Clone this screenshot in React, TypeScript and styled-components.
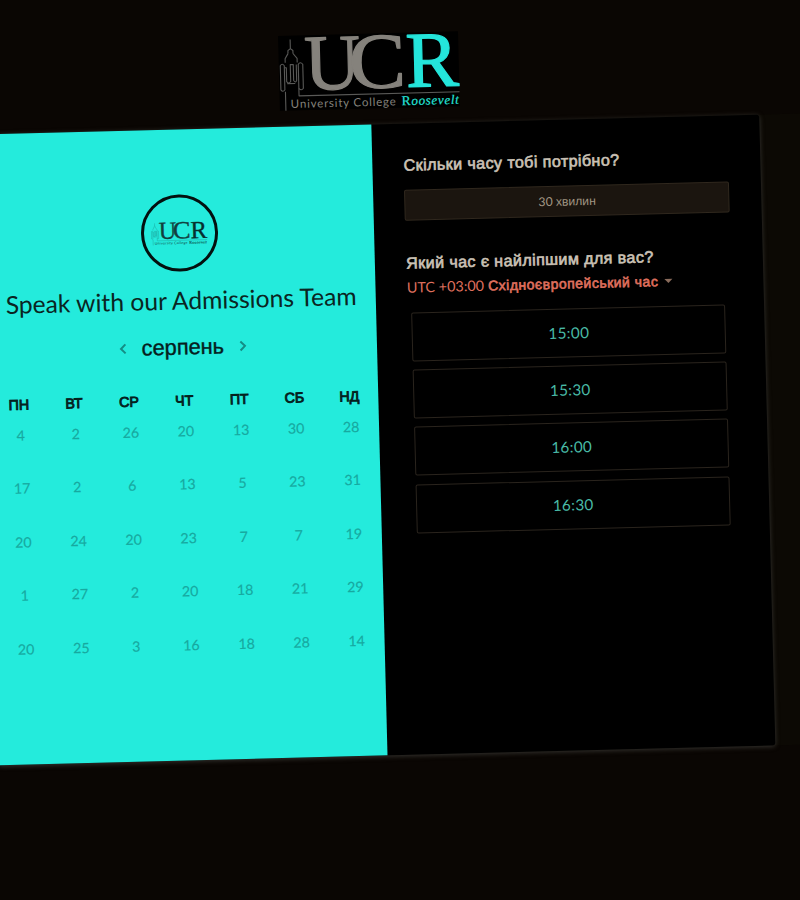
import React from "react";
import styled, { createGlobalStyle } from "styled-components";

const GlobalStyle = createGlobalStyle`
  html, body { margin: 0; height: 100%; overflow: hidden; background: #0a0603; }
  *, *::before, *::after { box-sizing: border-box; }
`;

const latin = `Lato, "Liberation Sans", sans-serif`;
const cyrillic = `"Liberation Sans", Arial, sans-serif`;

const Viewport = styled.div`
  width: 800px;
  height: 900px;
  overflow: hidden;
  background: #0a0603;
  font-family: ${latin};
`;

const Stage = styled.main`
  width: 840px;
  height: 920px;
  transform: rotate(-1.47deg);
  transform-origin: 0 0;
`;

const Header = styled.header`
  height: 134.2px;
  padding: 42.8px 0 0 277.4px;
`;

const LogoPlate = styled.div`
  width: 180px;
  height: 75px;
  background: #000;
`;

const Band = styled.section`
  display: flex;
  width: 840px;
  height: 630.7px;
  background: #0c0904;
`;

const Card = styled.div`
  display: flex;
  flex: none;
  width: 777.5px;
  height: 630.7px;
  margin-left: -21.2px;
  border-radius: 3px;
  background: #000;
  box-shadow: 0 1px 5px 0 rgba(92, 92, 88, 0.55);
`;

const CalendarPane = styled.div`
  display: flex;
  flex: none;
  flex-direction: column;
  align-items: center;
  width: 389px;
  padding-top: 64.5px;
  background: #24ebdc;
`;

const Avatar = styled.div`
  display: flex;
  align-items: center;
  justify-content: center;
  width: 77px;
  height: 77px;
  border: 3px solid #03100f;
  border-radius: 50%;
`;

const Title = styled.h1`
  margin: 14px 0 0;
  height: 30px;
  font: 400 24.65px/30px ${latin};
  color: #0a2522;
  white-space: nowrap;
`;

const MonthRow = styled.div`
  display: flex;
  align-items: center;
  justify-content: center;
  gap: 15px;
  height: 30px;
  margin-top: 17px;
  padding-left: 1px;
`;

const Month = styled.span`
  font: 400 21.8px/30px ${cyrillic};
  color: #05201d;
  -webkit-text-stroke: 0.4px #05201d;
`;

const ArrowButton = styled.button`
  display: flex;
  padding: 0;
  border: 0;
  background: none;
  color: #148d85;
`;

const Week = styled.div`
  display: grid;
  grid-template-columns: repeat(7, 55.1px);
  text-align: center;
`;

const Weekdays = styled(Week)`
  margin: 28px 0 0 1px;
  font: 400 14.2px/20px ${cyrillic};
  color: #04211e;
  -webkit-text-stroke: 0.9px #04211e;
`;

const Dates = styled(Week)`
  grid-auto-rows: 53.4px;
  margin: 1.3px 0 0 3px;
  font: 400 14.2px/40px ${latin};
  color: #17a9a0;
  -webkit-text-stroke: 0.15px #17a9a0;
`;

const BookingPane = styled.div`
  flex: 1;
  padding: 31px 32px 0 31.5px;
`;

const Question = styled.h2`
  margin: 0;
  height: 20px;
  font: 400 16.1px/20px ${cyrillic};
  letter-spacing: 0.4px;
  color: #cbc2b6;
  -webkit-text-stroke: 0.65px #cbc2b6;
  white-space: nowrap;
`;

const Duration = styled.div`
  height: 31px;
  margin: 15.3px 0 31.5px;
  border: 1px solid #30281e;
  border-radius: 2px;
  background: #1b150f;
  color: #a19583;
  font: 400 12.2px/29px ${latin};
  text-align: center;
`;

const CyrillicText = styled.span`
  font-family: ${cyrillic};
`;

const TimeZone = styled.button`
  display: flex;
  align-items: center;
  gap: 4px;
  height: 20px;
  margin-top: 5.5px;
  padding: 0;
  border: 0;
  background: none;
  color: #df6f5d;
  font: 400 14.4px/20px ${latin};
  white-space: nowrap;
`;

const ZoneName = styled.span`
  font: 400 14px/20px ${cyrillic};
  letter-spacing: 0.5px;
  -webkit-text-stroke: 0.65px #df6f5d;
`;

const Caret = styled.i`
  margin-left: 2.5px;
  border: 4px solid transparent;
  border-top-color: #8a6c5c;
  border-bottom: 0;
`;

const Slots = styled.div`
  display: flex;
  flex-direction: column;
  gap: 8.4px;
  margin: 14.2px 7.5px 0 4px;
`;

const Slot = styled.button`
  height: 49px;
  padding: 0;
  border: 1px solid #2a241d;
  border-radius: 2px;
  background: transparent;
  color: #48baa6;
  font: 400 15.3px/47px ${latin};
  letter-spacing: 0.3px;
`;

type LogoProps = { width: number; ink: string; accent: string; line: string };

function Logo({ width, ink, accent, line }: LogoProps) {
  return (
    <svg width={width} height={(width * 75) / 180} viewBox="0 0 180 75" overflow="visible">
      <g fill="none" stroke={line} strokeWidth="1.1" strokeLinejoin="round">
        <path d="M12 4v10M9.500 18v-3l2.500-2 2.500 2v3M9.500 18l-3 5v4M14.500 18l4 5v4" />
        <path d="M1.500 30q2-3 4 0v24q-2 3-4 0zM19.500 29q2-3 4.500 0v24q-2 3-4.500 0z" />
        <path d="M5.500 32h2v14q2 3 4 0V29h3v16q2 3 3 0V29M8 48h8" />
        <path d="M6 56v19M19.500 53v7.500H180" />
      </g>
      <g fontFamily="Liberation Serif, serif" fontSize="79" strokeWidth="1.2" strokeLinejoin="round">
        <text x="25.500" y="54.500" fill={ink} stroke={ink} textLength="56" lengthAdjust="spacingAndGlyphs">U</text>
        <text x="70" y="54.500" fill={ink} stroke={ink} textLength="57" lengthAdjust="spacingAndGlyphs">C</text>
        <text x="127" y="54.500" fill={accent} stroke={accent} textLength="53" lengthAdjust="spacingAndGlyphs">R</text>
      </g>
      <text x="11" y="72.500" fill={ink} fontFamily="Lato, sans-serif" fontSize="11.5" textLength="105">University College</text>
      <text x="122" y="72.500" fill={accent} fontFamily="Liberation Serif, serif" fontSize="13.5" stroke={accent} strokeWidth="0.2" textLength="57">
        R<tspan fontStyle="italic" fontSize="13">oosevelt</tspan>
      </text>
    </svg>
  );
}

function Chevron({ flip }: { flip?: boolean }) {
  return (
    <svg width="8" height="12" viewBox="0 0 8 12" fill="none" stroke="currentColor" strokeWidth="2">
      <path d={flip ? "M1.5 1.5L6 6l-4.500 4.500" : "M6.500 1.500L2 6l4.500 4.500"} />
    </svg>
  );
}

const weekdays = ["ПН", "ВТ", "СР", "ЧТ", "ПТ", "СБ", "НД"];
const dates = [
  4, 2, 26, 20, 13, 30, 28,
  17, 2, 6, 13, 5, 23, 31,
  20, 24, 20, 23, 7, 7, 19,
  1, 27, 2, 20, 18, 21, 29,
  20, 25, 3, 16, 18, 28, 14,
];
const slots = ["15:00", "15:30", "16:00", "16:30"];

export default function App() {
  return (
    <Viewport>
      <GlobalStyle />
      <Stage>
        <Header>
          <LogoPlate>
            <Logo width={180} ink="#85827c" accent="#24e5db" line="#595957" />
          </LogoPlate>
        </Header>
        <Band>
          <Card>
            <CalendarPane>
              <Avatar>
                <Logo width={56} ink="#123f3e" accent="#07302e" line="#198e87" />
              </Avatar>
              <Title>Speak with our Admissions Team</Title>
              <MonthRow>
                <ArrowButton><Chevron /></ArrowButton>
                <Month>серпень</Month>
                <ArrowButton><Chevron flip /></ArrowButton>
              </MonthRow>
              <Weekdays>{weekdays.map((d) => <span key={d}>{d}</span>)}</Weekdays>
              <Dates>{dates.map((d, i) => <span key={i}>{d}</span>)}</Dates>
            </CalendarPane>
            <BookingPane>
              <Question>Скільки часу тобі потрібно?</Question>
              <Duration>30 <CyrillicText>хвилин</CyrillicText></Duration>
              <Question>Який час є найліпшим для вас?</Question>
              <TimeZone>
                <span>UTC +03:00</span>
                <ZoneName>Східноєвропейський час</ZoneName>
                <Caret />
              </TimeZone>
              <Slots>{slots.map((s) => <Slot key={s}>{s}</Slot>)}</Slots>
            </BookingPane>
          </Card>
        </Band>
      </Stage>
    </Viewport>
  );
}
